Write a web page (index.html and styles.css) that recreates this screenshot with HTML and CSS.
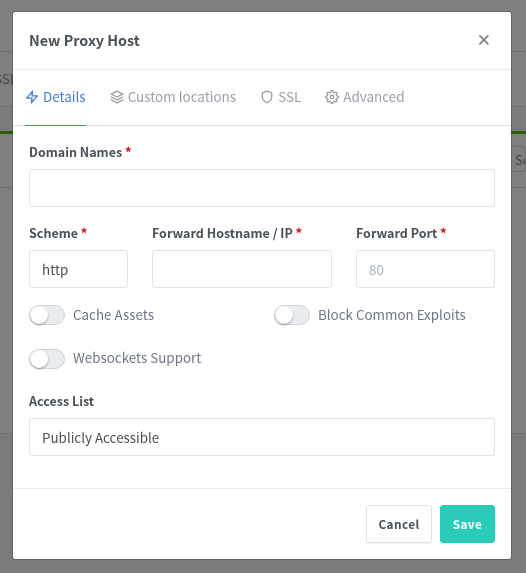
FILE: index.html
```
<!DOCTYPE html>
<html lang="en">
<head>
<meta charset="utf-8">
<title>New Proxy Host</title>
<link rel="stylesheet" href="styles.css">
</head>
<body>
<div class="page">
  <div class="page-header"></div>
  <div class="page-nav"><span>SSL</span></div>
  <div class="page-gap"></div>
  <div class="page-card">
    <div class="card-top"><div class="search">Search</div></div>
  </div>
</div>
<div class="backdrop">
<div class="modal">
  <div class="modal-header">
    <h5>New Proxy Host</h5>
    <button class="close" aria-label="Close"><svg width="12" height="12" viewBox="0 0 12 12"><path d="M1.4 1.4l9 9M10.400 1.400l-9 9"/></svg></button>
  </div>
  <nav class="tabs">
    <a class="tab active"><svg class="icon" viewBox="0 0 24 24"><polygon points="13 2 3 14 12 14 11 22 21 10 12 10 13 2"/></svg><span>Details</span></a>
    <a class="tab"><svg class="icon" viewBox="0 0 24 24"><polygon points="12 2 2 7 12 12 22 7 12 2"/><polyline points="2 17 12 22 22 17"/><polyline points="2 12 12 17 22 12"/></svg><span>Custom locations</span></a>
    <a class="tab"><svg class="icon" viewBox="0 0 24 24"><path d="M12 22s8-4 8-10V5l-8-3-8 3v7c0 6 8 10 8 10z"/></svg><span>SSL</span></a>
    <a class="tab"><svg class="icon" viewBox="0 0 24 24"><circle cx="12" cy="12" r="3"/><path d="M19.4 15a1.65 1.65 0 0 0 .33 1.82l.06.06a2 2 0 0 1 0 2.83 2 2 0 0 1-2.83 0l-.06-.06a1.65 1.65 0 0 0-1.82-.33 1.65 1.65 0 0 0-1 1.51V21a2 2 0 0 1-2 2 2 2 0 0 1-2-2v-.09A1.65 1.65 0 0 0 9 19.4a1.65 1.65 0 0 0-1.82.33l-.06.06a2 2 0 0 1-2.83 0 2 2 0 0 1 0-2.83l.06-.06a1.65 1.65 0 0 0 .33-1.82 1.65 1.65 0 0 0-1.51-1H3a2 2 0 0 1-2-2 2 2 0 0 1 2-2h.09A1.65 1.65 0 0 0 4.6 9a1.65 1.65 0 0 0-.33-1.82l-.06-.06a2 2 0 0 1 0-2.83 2 2 0 0 1 2.83 0l.06.06a1.65 1.65 0 0 0 1.82.33H9a1.65 1.65 0 0 0 1-1.51V3a2 2 0 0 1 2-2 2 2 0 0 1 2 2v.09a1.65 1.65 0 0 0 1 1.51 1.65 1.65 0 0 0 1.82-.33l.06-.06a2 2 0 0 1 2.83 0 2 2 0 0 1 0 2.83l-.06.06a1.65 1.65 0 0 0-.33 1.82V9a1.65 1.65 0 0 0 1.51 1H21a2 2 0 0 1 2 2 2 2 0 0 1-2 2h-.09a1.65 1.65 0 0 0-1.51 1z"/></svg><span>Advanced</span></a>
  </nav>
  <div class="modal-body">
    <div class="field"><label>Domain Names <b>*</b></label><div class="input"></div></div>
    <div class="row">
      <div class="field"><label>Scheme <b>*</b></label><div class="input">http</div></div>
      <div class="field"><label>Forward Hostname / IP <b>*</b></label><div class="input"></div></div>
      <div class="field"><label>Forward Port <b>*</b></label><div class="input placeholder">80</div></div>
    </div>
    <div class="switches">
      <div class="switch"><i></i><span>Cache Assets</span></div>
      <div class="switch"><i></i><span>Block Common Exploits</span></div>
      <div class="switch second-line"><i></i><span>Websockets Support</span></div>
    </div>
    <div class="field"><label>Access List</label><div class="input">Publicly Accessible</div></div>
  </div>
  <div class="modal-footer">
    <button class="btn cancel">Cancel</button>
    <button class="btn save">Save</button>
  </div>
</div>
</div>
</body>
</html>
```
FILE: styles.css
```
* { box-sizing: border-box; }
body {
  margin: 0;
  height: 573px;
  overflow: hidden;
  background: #f5f7fb;
  color: #495057;
  font: 13.4px/22px "Noto Sans CJK SC", sans-serif;
}
.page-header { height: 52px; background: #fff; border-bottom: 1px solid #e0e3ea; }
.page-nav { height: 55px; padding-top: 15px; background: #fff; border-bottom: 1px solid #e0e3ea; color: #8a90a0; }
.page-nav span { margin-left: -6px; }
.page-gap { height: 24px; }
.page-card { height: 303px; background: #fff; border-top: 3px solid #5eba00; border-bottom: 1px solid #dfe2e8; }
.card-top { height: 54px; padding-top: 12px; border-bottom: 1px solid #e0e3ea; }
.search { height: 26px; margin-left: 490px; padding-left: 24px; border: 1px solid #e0e3ea; line-height: 25px; color: #868e96; font-size: 12.5px; white-space: nowrap; overflow: hidden; }
.backdrop { position: fixed; inset: 0; padding: 11px 14px 0 12px; background: rgba(0, 0, 0, .5); }
.modal {
  width: 500px;
  height: 549px;
  display: flex;
  flex-direction: column;
  background: #fff;
  background-clip: padding-box;
  border: 1px solid rgba(0, 0, 0, .2);
  border-radius: 3px;
}
.modal-header { height: 58px; display: flex; align-items: center; justify-content: space-between; padding: 0 21px 0 16px; border-bottom: 1px solid #e9ecef; }
h5 { margin: 0; padding-bottom: 2px; font-size: 14.35px; line-height: 22px; font-weight: 700; }
.close { width: 12px; height: 12px; margin-top: -1px; padding: 0; border: 0; background: none; }
.close svg { display: block; fill: none; stroke: #808080; stroke-width: 1.7; }
.tabs { height: 56px; display: flex; gap: 24px; padding-left: 12px; border-bottom: 1px solid #dee2e6; }
.tab { height: 56px; display: flex; align-items: center; gap: 4px; padding-bottom: 2px; color: #9aa0ac; border-bottom: 1px solid transparent; font-size: 13.45px; white-space: nowrap; }
.tab span { padding-bottom: 1px; }
.tab.active { color: #467fcf; border-color: #467fcf; }
.icon { width: 14px; height: 14px; fill: none; stroke: currentColor; stroke-width: 2.3; stroke-linecap: round; stroke-linejoin: round; }
.modal-body { height: 362px; padding: 15px 16px 0; }
.field { display: flex; flex-direction: column; gap: 7px; }
label { font-size: 12.5px; line-height: 21px; font-weight: 700; white-space: nowrap; }
label b { color: #cd201f; }
.input { height: 38px; padding: 0 12px; border: 1px solid #dfe2ea; border-radius: 3px; line-height: 36px; }
.placeholder { color: #adb5bd; }
.row { display: grid; grid-template-columns: 99px 180px 139px; gap: 24px; margin-top: 15px; }
.switches { display: grid; grid-template-columns: 245px 1fr; row-gap: 22px; margin: 16px 0 20px; }
.switch { height: 22px; display: flex; align-items: center; gap: 8px; color: #6e7687; white-space: nowrap; }
.switch span { padding-bottom: 2px; }
.second-line span { padding-bottom: 4px; }
.switch i { width: 36px; height: 20px; background: #e9ecef; border: 1px solid #ced4da; border-radius: 10px; }
.switch i::before { content: ""; display: block; width: 18px; height: 18px; border-radius: 50%; background: #fff; box-shadow: 0 1px 2px rgba(0, 0, 0, .35); }
.modal-footer { height: 71px; display: flex; justify-content: flex-end; gap: 8px; padding: 16px; border-top: 1px solid #e9ecef; }
.btn { height: 38px; padding: 0 0 1px; border: 1px solid #dfe2ea; border-radius: 3px; font: 700 11.8px/20px "Noto Sans CJK SC", sans-serif; letter-spacing: .38px; }
.cancel { width: 66px; background: #fff; color: #495057; box-shadow: 0 1px 1px rgba(0, 0, 0, .05); }
.save { width: 55px; background: #2bcbba; border-color: #2bcbba; color: #fff; }
```
